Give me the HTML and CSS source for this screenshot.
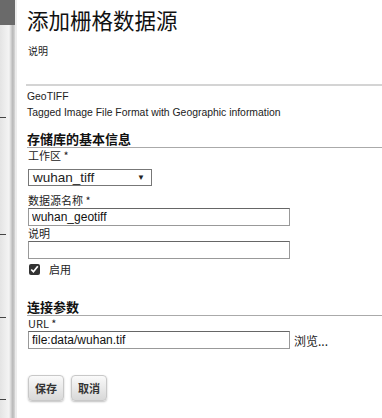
FILE: index.html
```html
<!DOCTYPE html>
<html lang="zh">
<head>
    <meta charset="UTF-8">
    <title>添加栅格数据源</title>
    <link rel="stylesheet" href="styles.css">
</head>
<body>
    <div class="page">
        <div class="sidebar">
            <div class="sidebar-top"></div>
            <div class="tick tick1"></div>
            <div class="tick tick2"></div>
            <div class="tick tick3"></div>
            <div class="tick tick4"></div>
        </div>
        <div class="main">
            <h1>添加栅格数据源</h1>
            <p class="desc">说明</p>

            <div class="store-type">
                <div>GeoTIFF</div>
                <div>Tagged Image File Format with Geographic information</div>
            </div>

            <h2>存储库的基本信息</h2>
            <label class="field-label">工作区 *</label>
            <div class="select">
                <span>wuhan_tiff</span>
                <span class="arrow">&#9660;</span>
            </div>

            <label class="field-label name-label">数据源名称 *</label>
            <input type="text" class="text-input" value="wuhan_geotiff">
            <label class="field-label">说明</label>
            <input type="text" class="text-input">

            <div class="check-row">
                <input type="checkbox" checked>
                <span>启用</span>
            </div>

            <h2 class="conn">连接参数</h2>
            <label class="field-label">URL *</label>
            <div class="url-row">
                <input type="text" class="text-input" value="file:data/wuhan.tif">
                <span class="browse">浏览...</span>
            </div>

            <div class="buttons">
                <button>保存</button>
                <button>取消</button>
            </div>
        </div>
    </div>
</body>
</html>
```

FILE: styles.css
```css
/* page layout */
body {
    margin: 0;
    background: #fff;
    color: #222;
    font-family: "Liberation Sans", "Noto Sans CJK SC", sans-serif;
    font-size: 11px;
}

.page {
    display: flex;
    height: 418px;
    overflow: hidden;
}

.sidebar {
    width: 15px;
    flex-shrink: 0;
    display: flex;
    flex-direction: column;
    background: linear-gradient(to right, #e4e4e4 0, #f4f4f4 60%, #b8b8b8 85%, #d8d8d8 100%);
    border-right: 2px solid #ececec;
}

.sidebar-top {
    height: 25px;
    background: #6a6a6a;
}

.tick {
    width: 6px;
    height: 1px;
    background: #444;
}

.tick1 { margin-top: 92px; }
.tick2 { margin-top: 116px; }
.tick3 { margin-top: 82px; }
.tick4 { margin-top: 81px; }

.main {
    flex: 1;
    padding-left: 9px;
}

h1 {
    margin: 3px 0 0 1px;
    font-family: "Noto Sans CJK SC", sans-serif;
    font-size: 21.5px;
    font-weight: normal;
    line-height: 34px;
    color: #111;
}

.desc {
    margin: 7px 0 0 2px;
    font-family: "Noto Sans CJK SC", sans-serif;
    font-size: 10px;
    line-height: 14px;
}

.store-type {
    margin-top: 26px;
    border-top: 2px solid #d4d4d4;
    padding: 3px 0 0 1px;
    line-height: 16px;
    font-size: 10.4px;
}

h2 {
    margin: 9px 0 0 1px;
    padding-bottom: 0;
    border-bottom: 1px solid #aaa;
    font-family: "Noto Sans CJK SC", sans-serif;
    font-size: 13px;
    line-height: 17px;
    color: #111;
}

.field-label {
    display: block;
    margin-left: 2px;
    font-family: "Noto Sans CJK SC", sans-serif;
    font-size: 11px;
    line-height: 15px;
}

.select {
    width: 112px;
    height: 15px;
    margin: 6px 0 0 2px;
    border: 1px solid #777;
    padding: 0 6px 0 4px;
    display: flex;
    justify-content: space-between;
    align-items: center;
    font-size: 13.5px;
}

.select .arrow {
    font-size: 8px;
}

.name-label {
    margin-top: 7px;
}

.text-input {
    display: block;
    box-sizing: border-box;
    width: 262px;
    height: 18px;
    margin: 0 0 0 2px;
    padding: 0 3px;
    border: 1px solid #999;
    border-top-color: #666;
    font-family: "Liberation Sans", sans-serif;
    font-size: 12px;
    color: #111;
}

.check-row {
    display: flex;
    align-items: center;
    margin: 2px 0 0 3px;
    font-family: "Noto Sans CJK SC", sans-serif;
    font-size: 11px;
}

.check-row input {
    margin: 0 9px 0 0;
    width: 11px;
    height: 11px;
    accent-color: #333;
}

.conn {
    margin-top: 21px;
}

.url-row {
    display: flex;
    align-items: center;
    margin-top: 0;
}

.browse {
    margin-left: 4px;
    font-family: "Noto Sans CJK SC", sans-serif;
    font-size: 12px;
}

.buttons {
    display: flex;
    gap: 7px;
    margin: 26px 0 0 2px;
}

button {
    width: 36px;
    height: 26px;
    padding: 0;
    border: 1px solid #c8c8c8;
    border-radius: 4px;
    background: linear-gradient(#fafafa, #d8d8d8);
    box-shadow: 0 1px 2px rgba(0, 0, 0, 0.25);
    font-family: "Noto Sans CJK SC", sans-serif;
    font-size: 11px;
    font-weight: bold;
    color: #333;
}
```
